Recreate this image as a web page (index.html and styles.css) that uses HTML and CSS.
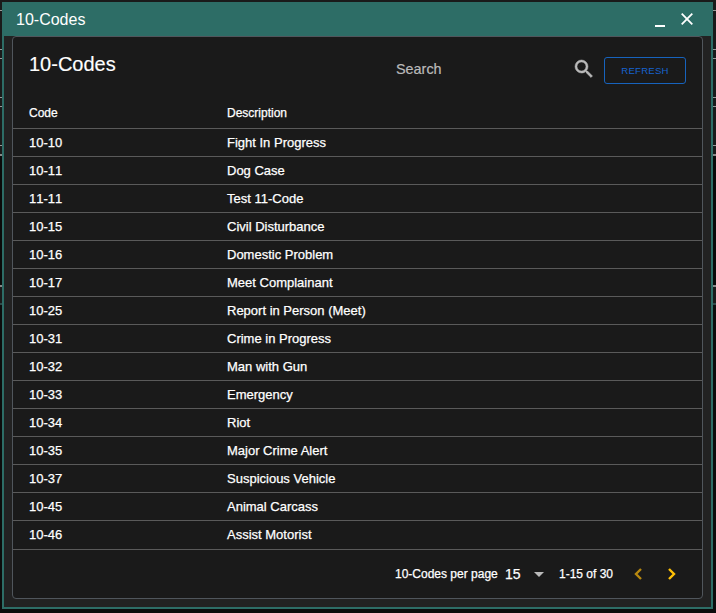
FILE: index.html
```html
<!DOCTYPE html>
<html lang="en">
<head>
<meta charset="utf-8">
<title>10-Codes</title>
<link rel="stylesheet" href="styles.css">
</head>
<body>
<div class="backdrop" aria-hidden="true">
  <div class="strip"></div>
  <div class="strip"></div>
  <div class="strip"></div>
  <div class="block"></div>
  <div class="lower"></div>
</div>
<section class="window">
  <header class="titlebar">
    <span class="window-title">10-Codes</span>
    <button class="control" aria-label="Minimize"><svg width="12" height="16" viewBox="0 0 12 16"><path d="M1 14h10v2H1z" fill="#fff"/></svg></button>
    <button class="control close" aria-label="Close"><svg width="12" height="12" viewBox="0 0 12 12"><path d="M.7.7l10.6 10.6M11.3.7L.7 11.3" stroke="#fff" stroke-width="1.8"/></svg></button>
  </header>
  <main class="panel">
    <div class="toolbar">
      <h1>10-Codes</h1>
      <span class="search">Search</span>
      <svg class="magnifier" width="24" height="24" viewBox="0 0 24 24"><path fill="#bababa" stroke="#bababa" stroke-width=".5" d="M15.5 14h-.79l-.28-.27A6.47 6.47 0 0 0 16 9.5 6.5 6.5 0 1 0 9.5 16c1.61 0 3.09-.59 4.23-1.57l.27.28v.79l5 4.99L20.49 19l-4.99-5zm-6 0a4.5 4.5 0 1 1 0-9 4.5 4.5 0 0 1 0 9z"/></svg>
      <button class="refresh">REFRESH</button>
    </div>
    <table>
      <thead><tr><th>Code</th><th>Description</th></tr></thead>
      <tbody>
        <tr><td>10-10</td><td>Fight In Progress</td></tr>
        <tr><td>10-11</td><td>Dog Case</td></tr>
        <tr><td>11-11</td><td>Test 11-Code</td></tr>
        <tr><td>10-15</td><td>Civil Disturbance</td></tr>
        <tr><td>10-16</td><td>Domestic Problem</td></tr>
        <tr><td>10-17</td><td>Meet Complainant</td></tr>
        <tr><td>10-25</td><td>Report in Person (Meet)</td></tr>
        <tr><td>10-31</td><td>Crime in Progress</td></tr>
        <tr><td>10-32</td><td>Man with Gun</td></tr>
        <tr><td>10-33</td><td>Emergency</td></tr>
        <tr><td>10-34</td><td>Riot</td></tr>
        <tr><td>10-35</td><td>Major Crime Alert</td></tr>
        <tr><td>10-37</td><td>Suspicious Vehicle</td></tr>
        <tr><td>10-45</td><td>Animal Carcass</td></tr>
        <tr><td>10-46</td><td>Assist Motorist</td></tr>
      </tbody>
    </table>
    <footer class="pager">
      <span class="per-page">10-Codes per page</span>
      <span class="size">15</span>
      <svg class="caret" width="10" height="5" viewBox="0 0 10 5"><path d="M0 0h10L5 5z" fill="#bababa"/></svg>
      <span class="range">1-15 of 30</span>
      <svg class="prev" width="8" height="12" viewBox="0 0 8 12"><path d="M7 1L2 6l5 5" fill="none" stroke="#b8890f" stroke-width="2.4"/></svg>
      <svg class="next" width="8" height="12" viewBox="0 0 8 12"><path d="M1 1l5 5-5 5" fill="none" stroke="#ffc107" stroke-width="2.4"/></svg>
    </footer>
  </main>
</section>
</body>
</html>
```
FILE: styles.css
```css
* { box-sizing: border-box; }
body {
  margin: 0;
  height: 613px;
  overflow: hidden;
  background: #1a1a1a;
  color: #fff;
  font-family: "Liberation Sans", Arial, sans-serif;
}
.backdrop { position: absolute; inset: 0; padding-top: 10px; overflow: hidden; }
.strip { height: 40px; margin-bottom: 8px; border: solid #999; border-width: 1px 0; }
.block { height: 133px; border: solid #888; border-width: 2px 0; background: #0a0a0a; }
.lower { height: 310px; margin-top: 16px; border-top: 2px solid #2f4a4a; background: #0c0c0c; }
.window {
  position: relative;
  width: 711px;
  height: 607px;
  margin: 2px 0 0 2px;
  border: 2px solid #2d6d66;
  background: #222;
}
.titlebar {
  display: flex;
  align-items: center;
  height: 34px;
  margin: -2px -2px 0;
  padding: 0 20px 0 14px;
  background: #2d6d66;
}
.window-title { flex: 1; padding-top: 1px; font-size: 16px; }
button { font-family: inherit; }
.control { display: flex; padding: 0; border: 0; background: none; }
.close { margin-left: 15px; }
.panel {
  width: 691px;
  height: 563px;
  margin-left: 8px;
  border: 1px solid #50565c;
  border-radius: 4px;
  background: #1a1a1a;
}
.toolbar { display: flex; height: 62px; padding: 0 16px; }
h1 { width: 367px; margin: 14px 0 0; font-size: 20px; font-weight: 400; line-height: 26px; -webkit-text-stroke: .15px #fff; }
.search { width: 176px; margin-top: 22px; color: #bababa; font-size: 14.4px; line-height: 20px; -webkit-text-stroke: .2px #bababa; }
.magnifier { margin-top: 20px; }
.refresh {
  width: 82px;
  height: 27px;
  margin: 20px 0 0 8px;
  padding: 0;
  border: 1px solid #1763bd;
  border-radius: 3px;
  background: none;
  color: #1763cf;
  font-size: 9.6px;
  letter-spacing: .25px;
}
table { width: 100%; border-collapse: separate; border-spacing: 0; table-layout: fixed; }
th, td {
  height: 28px;
  padding: 0 0 0 16px;
  border-bottom: 1px solid #5a5a5a;
  text-align: left;
  font-size: 13px;
  -webkit-text-stroke: .25px #fff;
}
th { width: 198px; height: 30px; padding-bottom: 1px; font-size: 12px; font-weight: 400; }
th + th { width: auto; }
td:first-child { font-kerning: none; }
tr:last-child td { height: 29px; padding-bottom: 2px; }
.pager { display: flex; align-items: center; height: 48px; padding-left: 382px; font-size: 12px; -webkit-text-stroke: .25px #fff; }
.per-page { width: 110px; }
.size { width: 29px; font-size: 14px; }
.caret { margin-right: 15px; }
.range { width: 75px; }
.next { margin-left: 26px; }
svg { flex: none; -webkit-text-stroke: 0; }
span { white-space: nowrap; }
```
